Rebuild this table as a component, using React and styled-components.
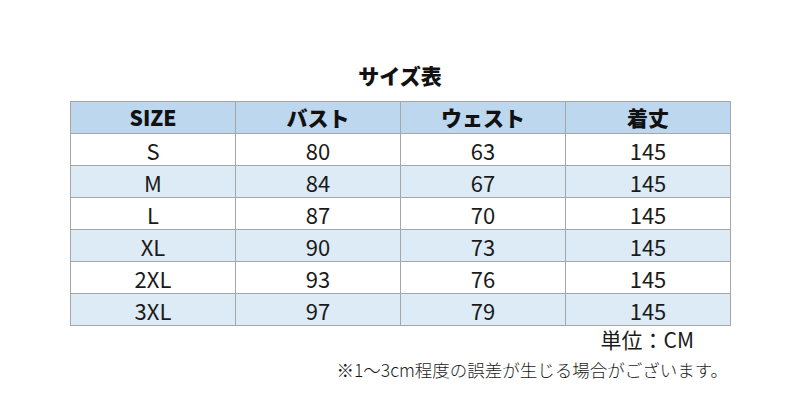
import React from 'react';
import styled, { createGlobalStyle } from 'styled-components';

const GlobalStyle = createGlobalStyle`
  html, body {
    margin: 0;
    padding: 0;
    background: #ffffff;
  }
  body {
    font-family: "Noto Sans CJK JP", "Noto Sans", sans-serif;
    color: #1a1a1a;
  }
`;

const rows = [
  ['S', '80', '63', '145'],
  ['M', '84', '67', '145'],
  ['L', '87', '70', '145'],
  ['XL', '90', '73', '145'],
  ['2XL', '93', '76', '145'],
  ['3XL', '97', '79', '145'],
];

const headers = ['SIZE', 'バスト', 'ウェスト', '着丈'];

export default function App() {
  return (
    <>
      <GlobalStyle />
      <Page>
        <Title>サイズ表</Title>
        <SizeGrid>
          {headers.map((h) => (
            <HeadCell key={h}>{h}</HeadCell>
          ))}
          {rows.map((row, i) =>
            row.map((value, j) => (
              <Cell key={`${i}-${j}`} $shaded={i % 2 === 1}>
                {value}
              </Cell>
            ))
          )}
        </SizeGrid>
        <Unit>単位：CM</Unit>
        <Note>※1～3cm程度の誤差が生じる場合がございます。</Note>
      </Page>
    </>
  );
}

const Page = styled.div`
  width: 800px;
  height: 416px;
  box-sizing: border-box;
  padding-top: 61px;
  display: flex;
  flex-direction: column;
`;

const Title = styled.h1`
  margin: 0 0 12px;
  height: 28px;
  line-height: 28px;
  font-size: 21px;
  font-weight: 900;
  text-align: center;
  color: #111;
`;

const SizeGrid = styled.div`
  display: grid;
  grid-template-columns: repeat(4, 165px);
  grid-auto-rows: 32px;
  margin-left: 70px;
  width: max-content;
  border-left: 1px solid #a6a6a6;
  border-top: 1px solid #a6a6a6;
`;

const Cell = styled.div`
  box-sizing: border-box;
  border-right: 1px solid #a6a6a6;
  border-bottom: 1px solid #a6a6a6;
  display: flex;
  align-items: center;
  justify-content: center;
  font-size: 22px;
  line-height: 1;
  color: #1a1a1a;
  background: ${(p) => (p.$shaded ? '#ddebf7' : '#ffffff')};
`;

const HeadCell = styled(Cell)`
  background: #bdd7ee;
  font-weight: 900;
  font-size: 21px;
  color: #111;
`;

const Unit = styled.div`
  align-self: flex-end;
  margin-right: 106px;
  height: 26px;
  line-height: 26px;
  font-size: 21px;
  color: #1a1a1a;
`;

const Note = styled.div`
  align-self: flex-end;
  margin-top: 7px;
  margin-right: 72px;
  line-height: 22px;
  font-size: 17.5px;
  font-weight: 300;
  color: #1a1a1a;
`;
